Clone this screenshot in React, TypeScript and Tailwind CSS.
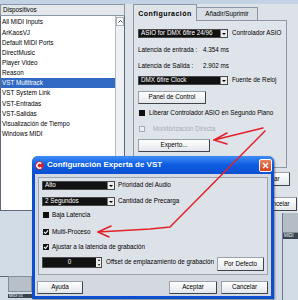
import React from "react";

const devices = [
  "All MIDI Inputs",
  "ArKaosVJ",
  "Default MIDI Ports",
  "DirectMusic",
  "Player Video",
  "Reason",
  "VST Multitrack",
  "VST System Link",
  "VST-Entradas",
  "VST-Salidas",
  "Visualización de Tiempo",
  "Windows MIDI",
];

function Drop({ className, text }: { className: string; text: string }) {
  return (
    <div className={"flex h-[9px] bg-[#121212] border border-[#4a4a4a] " + className}>
      <div className="flex-1 flex items-center pl-[2px] text-white">{text}</div>
      <div className="w-[7px] bg-[#ececec] border-l border-[#777] flex items-center justify-center">
        <div className="w-0 h-0 border-l-[2px] border-r-[2px] border-t-[2px] border-l-transparent border-r-transparent border-t-black" />
      </div>
    </div>
  );
}

function Btn({ className, children }: { className: string; children?: React.ReactNode }) {
  return (
    <div
      className={
        "flex items-center justify-center bg-gradient-to-b from-white to-[#e4e7eb] border border-[#9aa1aa] border-r-[#3f444a] border-b-[#3f444a] rounded-[1px] " +
        className
      }
    >
      {children}
    </div>
  );
}

function BoxFilled() {
  return <div className="w-[6px] h-[6px] bg-[#111]" />;
}

function BoxChecked() {
  return (
    <div className="w-[6px] h-[6px] bg-[#111] flex items-center justify-center">
      <svg width="6" height="6" viewBox="0 0 6 6">
        <path d="M1 3 L2.5 4.5 L5 1.3" stroke="white" strokeWidth="1.1" fill="none" />
      </svg>
    </div>
  );
}

export default function App() {
  return (
    <div className="relative w-[298px] h-[300px] overflow-hidden bg-[#dce2e8] text-[6.3px] leading-none text-black font-['Liberation_Sans',Arial,sans-serif]">
      <div className="h-[4px] bg-[#c4d3e3]" />
      <div className="flex h-[296px]">
        {/* left column */}
        <div className="w-[125px] flex flex-col">
          <div className="h-[12px] border border-[#8a96a4] bg-[#e3e7ec] pl-[2px] flex items-center">
            Dispositivos
          </div>
          <div className="h-[195px] border-x border-b border-[#5f6a76] bg-white flex">
            <div className="flex-1 pt-[1.5px]">
              {devices.map((d) => (
                <div
                  key={d}
                  className={
                    "h-[10.15px] flex items-center pl-[1px] " +
                    (d === "VST Multitrack" ? "bg-[#316ac5] text-white" : "")
                  }
                >
                  {d}
                </div>
              ))}
            </div>
            <div className="w-[9px] bg-[#eef0f3] border-l border-[#b5bcc5] pt-[1px]">
              <div className="h-[9px] bg-white border border-[#a8b0ba] flex items-center justify-center">
                <svg width="5" height="3" viewBox="0 0 5 3">
                  <path d="M0.5 2.5 L2.5 0.5 L4.5 2.5" stroke="#333" strokeWidth="0.9" fill="none" />
                </svg>
              </div>
            </div>
          </div>
          <div className="flex-1 bg-[#d1dce7] flex flex-col pt-[65px]">
            <div className="flex items-start">
              <div className="w-[8px] h-px bg-[#5d6773]" />
              <div className="w-[24px] h-[16px] bg-[#b7bfc8] border border-[#858d96]" />
            </div>
            <div className="ml-[8px] mt-[2px] w-[24px] h-[4px] bg-[#39434f] text-[4px] text-white pl-[1px]">MIDI 01</div>
          </div>
        </div>

        <div className="w-[8px]" />

        {/* right column */}
        <div className="flex-1 flex flex-col">
          <div className="h-[16px] flex items-end">
            <div className="relative z-10 w-[64px] h-[17px] -mb-px border border-b-0 border-[#8c98a6] bg-[#dfe4ea] flex items-center justify-center font-bold text-[7px] tracking-[0.45px]">
              Configuración
            </div>
            <div className="w-[61px] h-[13px] border-t border-r border-[#8c98a6] bg-[#d9dee5] flex items-center justify-center">
              Añadir/Suprimir
            </div>
          </div>
          <div className="w-[154px] h-[148px] border border-[#8c98a6] bg-[#dfe4ea] pl-[4px] pt-[8px] flex flex-col">
            <div className="h-[9px] flex items-center">
              <Drop className="w-[90px]" text="ASIO for DMX 6fire 24/96" />
              <span className="ml-[4px]">Controlador ASIO</span>
            </div>
            <div className="mt-[8px] h-[8px] flex items-center">
              <span className="w-[65px]">Latencia de entrada :</span>
              <span>4.354 ms</span>
            </div>
            <div className="mt-[8px] h-[8px] flex items-center">
              <span className="w-[65px]">Latencia de Salida :</span>
              <span>2.902 ms</span>
            </div>
            <div className="mt-[6px] h-[9px] flex items-center">
              <Drop className="w-[90px]" text="DMX 6fire Clock" />
              <span className="ml-[4px]">Fuente de Reloj</span>
            </div>
            <Btn className="mt-[6px] w-[68px] h-[13px]">Panel de Control</Btn>
            <div className="mt-[5px] h-[8px] flex items-center">
              <div className="ml-[1px]">
                <BoxFilled />
              </div>
              <span className="ml-[4px] whitespace-nowrap">Liberar Controlador ASIO en Segundo Plano</span>
            </div>
            <div className="mt-[8px] h-[8px] flex items-center">
              <div className="ml-[1px] w-[6px] h-[6px] border border-[#a3abb5] bg-[#eceff3]" />
              <span className="ml-[8px] text-[#a6adb6]">Monitorización Directa</span>
            </div>
            <Btn className="mt-[6px] w-[72px] h-[13px]">Experto...</Btn>
          </div>
          <div className="flex-1 flex flex-col items-end">
            <Btn className="mt-[4px] mr-[8px] w-[40px] h-[14px]">Aplicar</Btn>
            <Btn className="mt-[11px] mr-[1px] w-[40px] h-[14px]">Cancelar</Btn>
            <div className="self-stretch flex-1 mt-[2px] bg-[#d1dce7] flex justify-end">
              <div className="w-[16px] flex flex-col border-l border-[#6f7a86]">
                <div className="h-[20px] bg-[#b4bcc6] border-b border-[#858d96]" />
                <div className="h-[6px] bg-[#3a4450] text-[4.5px] text-white pl-[1px] flex items-center">MIDI</div>
              </div>
            </div>
          </div>
        </div>
      </div>

      {/* Dialog */}
      <div className="absolute left-[32px] top-[156px] w-[242px] h-[143px] rounded-t-[6px] bg-[#0b4fd0] flex flex-col shadow-[1px_1px_2px_rgba(0,0,0,0.4)]">
        <div className="h-[18px] rounded-t-[6px] bg-gradient-to-b from-[#3f8cf6] via-[#0b5ce2] to-[#0a50d2] flex items-center pl-[3px] pr-[2px]">
          <svg width="9" height="9" viewBox="0 0 9 9">
            <circle cx="4.5" cy="4.5" r="4.3" fill="#d4202a" />
            <path d="M6.3 2.6 A2.6 2.6 0 1 0 6.3 6.4" stroke="white" strokeWidth="1.5" fill="none" />
          </svg>
          <span className="ml-[3px] text-white font-bold text-[8px]">Configuración Experta de VST</span>
          <div className="ml-auto w-[13px] h-[13px] rounded-[2px] border border-white bg-gradient-to-b from-[#e9825e] to-[#d5411d] flex items-center justify-center">
            <svg width="7" height="7" viewBox="0 0 7 7">
              <path d="M1 1 L6 6 M6 1 L1 6" stroke="white" strokeWidth="1.4" />
            </svg>
          </div>
        </div>
        <div className="flex-1 mx-[3px] mb-[3px] bg-[#d4d9e1] px-[3px] pt-[3px] flex flex-col">
          <div className="h-[98px] border border-[#9aa3ae] bg-[#dde1e8] pl-[3px] pr-[3px] pt-[3px] flex flex-col">
            <div className="h-[9px] flex items-center">
              <Drop className="w-[73px]" text="Alto" />
              <span className="ml-[3px]">Prioridad del Audio</span>
            </div>
            <div className="mt-[7px] h-[9px] flex items-center">
              <Drop className="w-[73px]" text="2 Segundos" />
              <span className="ml-[3px]">Cantidad de Precarga</span>
            </div>
            <div className="mt-[5px] h-[8px] flex items-center">
              <div className="ml-[1px]">
                <BoxFilled />
              </div>
              <span className="ml-[3px]">Baja Latencia</span>
            </div>
            <div className="mt-[9px] h-[8px] flex items-center">
              <div className="ml-[1px]">
                <BoxChecked />
              </div>
              <span className="ml-[3px]">Multi-Proceso</span>
            </div>
            <div className="mt-[7px] h-[8px] flex items-center">
              <div className="ml-[1px]">
                <BoxChecked />
              </div>
              <span className="ml-[3px]">Ajustar a la latencia de grabación</span>
            </div>
            <div className="mt-[6px] flex items-start">
              <div className="w-[60px] h-[11px] bg-[#121212] border border-[#4a4a4a] flex">
                <div className="flex-1 flex items-center justify-center text-white">0</div>
                <div className="w-[5px] bg-[#ececec] flex flex-col items-center justify-around">
                  <div className="w-0 h-0 border-l-[1.5px] border-r-[1.5px] border-b-[2px] border-l-transparent border-r-transparent border-b-black" />
                  <div className="w-0 h-0 border-l-[1.5px] border-r-[1.5px] border-t-[2px] border-l-transparent border-r-transparent border-t-black" />
                </div>
              </div>
              <span className="ml-[4px] h-[11px] flex items-center whitespace-nowrap">Offset de emplazamiento de grabación</span>
              <Btn className="ml-auto w-[47px] h-[14px]">Por Defecto</Btn>
            </div>
          </div>
          <div className="mt-[6px] flex">
            <Btn className="-ml-px w-[46px] h-[13px]">Ayuda</Btn>
            <Btn className="ml-auto w-[48px] h-[13px]">Aceptar</Btn>
            <Btn className="ml-[4px] w-[47px] h-[13px]">Cancelar</Btn>
          </div>
        </div>
      </div>

      {/* red annotation arrows */}
      <svg className="absolute left-0 top-0 pointer-events-none" width="298" height="300" viewBox="0 0 298 300">
        <g stroke="#e3222b" strokeWidth="1.5" fill="none" strokeLinecap="round" strokeLinejoin="round">
          <path d="M263 128 L214 140" />
          <path d="M214 140 L227 133 M214 140 L227 144" />
          <path d="M265 131 L170 227 L150 229 L98 232" />
          <path d="M98 232 L111 226 M98 232 L109 237" />
        </g>
      </svg>
    </div>
  );
}
